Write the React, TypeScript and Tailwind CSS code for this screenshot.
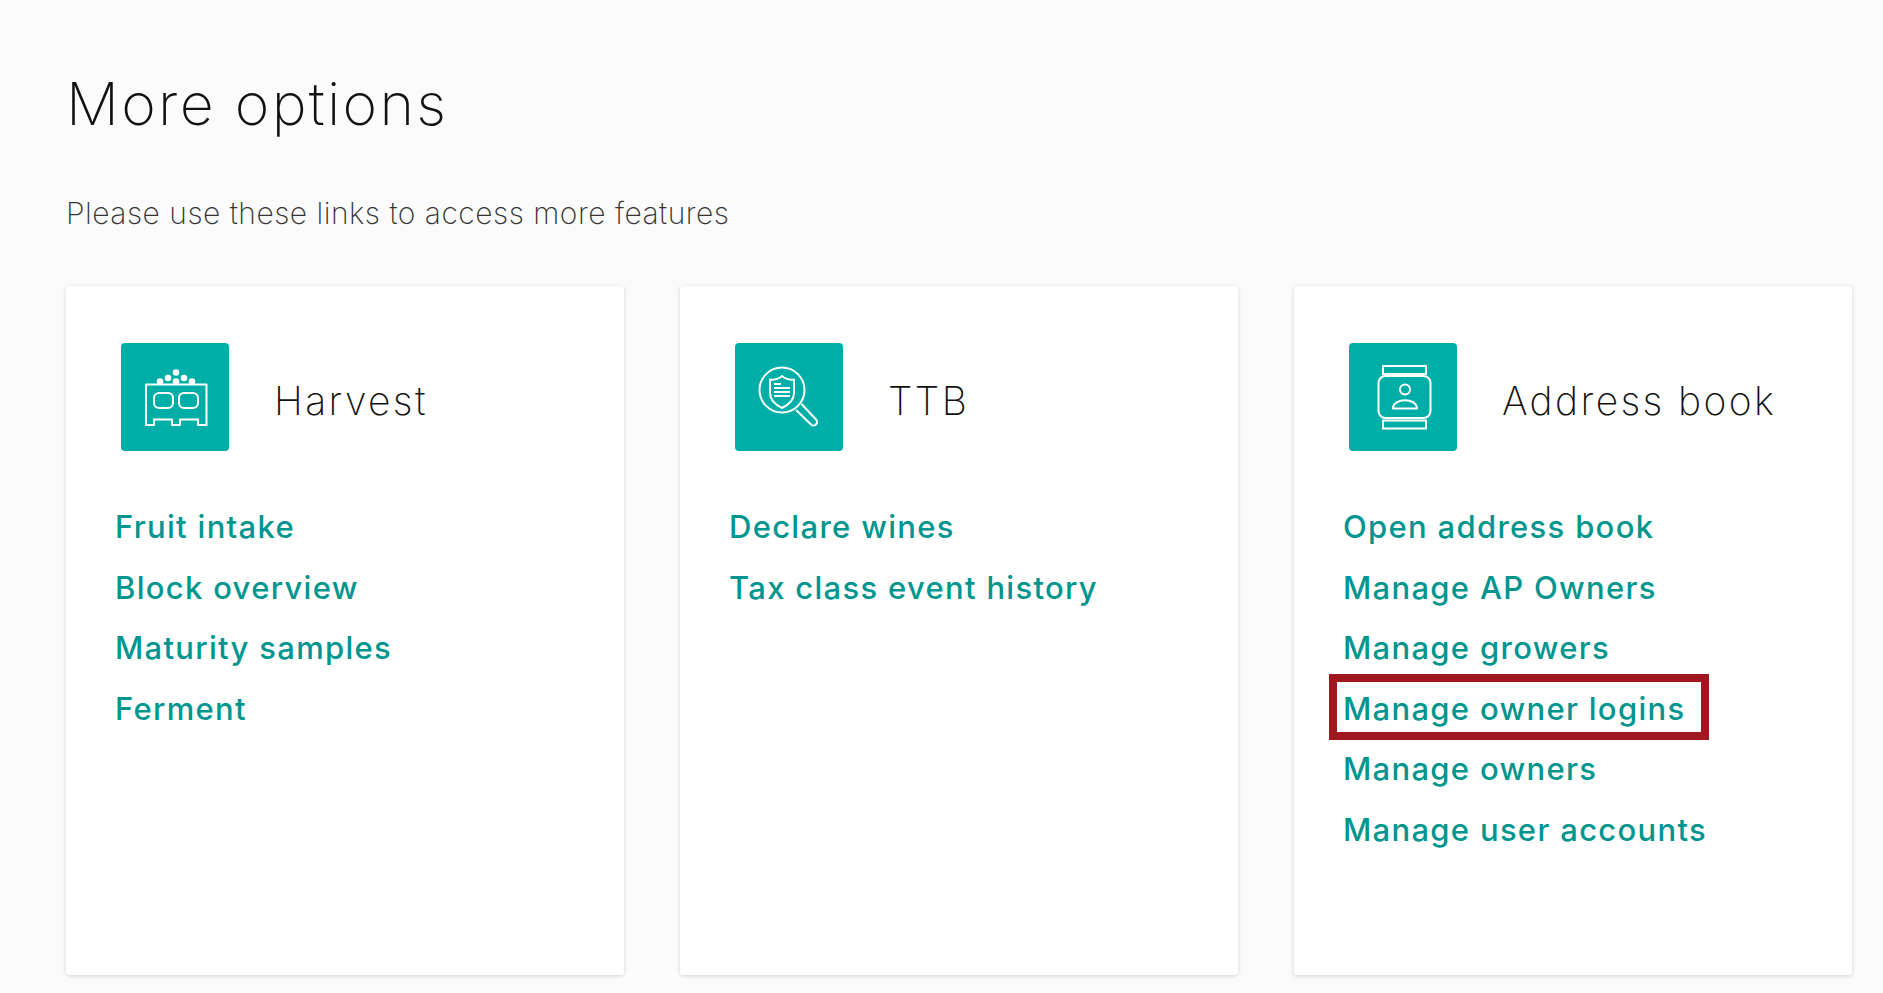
const harvestIcon = (
  <svg viewBox="0 0 108 108" className="h-[108px] w-[108px]" fill="none" stroke="#fff" strokeWidth="2">
    <path d="M25 41.500H85.500V82H77V76.500H59V82H51V76.500H33V82H25Z" strokeLinejoin="round" />
    <rect x="33" y="50" width="19" height="15" rx="5" />
    <rect x="58" y="50" width="19" height="15" rx="5" />
    <g fill="#fff" stroke="none">
      <circle cx="39" cy="38.500" r="3.300" />
      <circle cx="47" cy="35" r="3.300" />
      <circle cx="55" cy="38.500" r="3.300" />
      <circle cx="55" cy="29.500" r="3.300" />
      <circle cx="63" cy="35" r="3.300" />
      <circle cx="71" cy="38.500" r="3.300" />
    </g>
  </svg>
);

const ttbIcon = (
  <svg viewBox="0 0 108 108" className="h-[108px] w-[108px]" fill="none" stroke="#fff" strokeWidth="2">
    <circle cx="47" cy="47" r="22.500" />
    <path d="M47 33l2 1.500c3 2 7 2.500 10 2V50c0 7-6 12-12 15-6-3-12-8-12-15V36.500c3 .5 7 0 10-2z" strokeLinejoin="round" />
    <path d="M39 41H46M39 45H55M39 49H55M39 53H55" strokeWidth="1.800" />
    <path d="M61 67L76 81.500a3.500 3.500 0 0 0 5-5L66.500 61" strokeLinejoin="round" />
  </svg>
);

const addressIcon = (
  <svg viewBox="0 0 108 108" className="h-[108px] w-[108px]" fill="none" stroke="#fff" strokeWidth="2">
    <rect x="34" y="23" width="43" height="8" />
    <rect x="29.500" y="33" width="52" height="42" rx="7" />
    <rect x="34" y="77.500" width="43" height="8" />
    <circle cx="56" cy="46.500" r="5" />
    <path d="M44 65.500c0-11 24-11 24 0z" strokeLinejoin="round" />
  </svg>
);

type CardData = {
  title: string;
  icon: React.ReactNode;
  links: string[];
};

const cards: CardData[] = [
  { title: "Harvest", icon: harvestIcon, links: ["Fruit intake", "Block overview", "Maturity samples", "Ferment"] },
  { title: "TTB", icon: ttbIcon, links: ["Declare wines", "Tax class event history"] },
  {
    title: "Address book",
    icon: addressIcon,
    links: ["Open address book", "Manage AP Owners", "Manage growers", "Manage owner logins", "Manage owners", "Manage user accounts"],
  },
];

function Card({ card }: { card: CardData }) {
  return (
    <div className="h-[689px] flex-1 rounded-[3px] bg-white pt-[57px] pl-[55px] shadow-[0_1px_4px_rgba(0,0,0,0.16)]">
      <div className="flex h-[108px] items-center">
        <div className="h-[108px] w-[108px] shrink-0 rounded-[4px] bg-[#00aea8]">{card.icon}</div>
        <div className="ml-[45px] pt-[6px] text-[39px] leading-none font-extralight tracking-[2.4px] text-[#111]">{card.title}</div>
      </div>
      <ul className="mt-[46px] -ml-[6px] flex flex-col">
        {card.links.map((l) => (
          <li key={l} className="relative h-[60.5px] text-[31px] leading-[60.500px] font-[450] tracking-[1.3px] text-[#00968f]">
            {l}
            {l === "Manage owner logins" && (
              <span className="absolute top-[-5px] left-[-14px] h-[66px] w-[380px] border-[8px] border-[#a0171f]" />
            )}
          </li>
        ))}
      </ul>
    </div>
  );
}

export default function App() {
  return (
    <div className="h-[993px] overflow-hidden bg-[#fbfbfb] pt-[70px] pr-[31px] pl-[66px] font-['Inter',sans-serif]">
      <h1 className="text-[59px] leading-[68px] font-extralight tracking-[2.3px] text-[#111]">More options</h1>
      <p className="mt-[55px] text-[30px] leading-[40px] font-extralight tracking-[0.5px] text-[#333]">Please use these links to access more features</p>
      <div className="mt-[53px] flex gap-[56px]">
        {cards.map((c) => (
          <Card key={c.title} card={c} />
        ))}
      </div>
    </div>
  );
}
